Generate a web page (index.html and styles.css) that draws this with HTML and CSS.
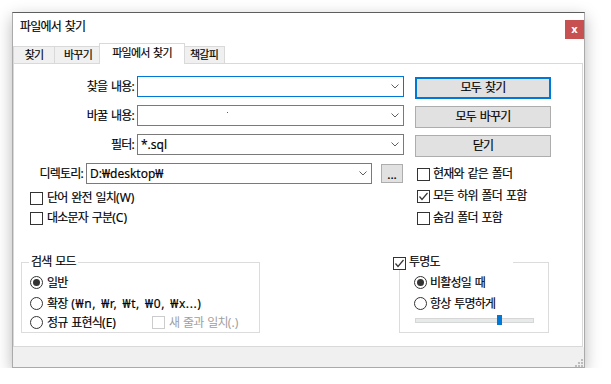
FILE: index.html
```html
<!DOCTYPE html>
<html lang="ko">
<head>
<meta charset="utf-8">
<title>파일에서 찾기</title>
<link rel="stylesheet" href="styles.css">
</head>
<body>
<div class="window">
  <div class="titlebar">
    <span class="title">파일에서 찾기</span>
    <span class="close">x</span>
  </div>
  <div class="tabs">
    <span class="tab t-find">찾기</span>
    <span class="tab t-replace">바꾸기</span>
    <span class="tab active">파일에서 찾기</span>
    <span class="tab t-mark">책갈피</span>
  </div>
  <div class="panel">
    <div class="top">
      <div class="left">
        <div class="row">
          <span class="lbl">찾을 내용:</span>
          <div class="combo focus"><span class="val"></span><svg class="chev" width="8" height="5" viewBox="0 0 8 5"><polyline points="0.5,0.5 4,4 7.5,0.5" fill="none" stroke="#606060" stroke-width="1"/></svg></div>
        </div>
        <div class="row">
          <span class="lbl">바꿀 내용:</span>
          <div class="combo"><span class="dot"></span><svg class="chev" width="8" height="5" viewBox="0 0 8 5"><polyline points="0.5,0.5 4,4 7.5,0.5" fill="none" stroke="#606060" stroke-width="1"/></svg></div>
        </div>
        <div class="row">
          <span class="lbl">필터:</span>
          <div class="combo"><span class="val lat">*.sql</span><svg class="chev" width="8" height="5" viewBox="0 0 8 5"><polyline points="0.5,0.5 4,4 7.5,0.5" fill="none" stroke="#606060" stroke-width="1"/></svg></div>
        </div>
        <div class="row dir">
          <span class="dirlbl">디렉토리:</span>
          <div class="combo wide"><span class="val lat">D:₩desktop₩</span><svg class="chev" width="8" height="5" viewBox="0 0 8 5"><polyline points="0.5,0.5 4,4 7.5,0.5" fill="none" stroke="#606060" stroke-width="1"/></svg></div>
          <span class="browse">...</span>
        </div>
        <div class="lchecks">
          <div class="ck"><span class="box"></span><span>단어 완전 일치<span class="lat">(W)</span></span></div>
          <div class="ck"><span class="box"></span><span>대소문자 구분<span class="lat">(C)</span></span></div>
        </div>
      </div>
      <div class="right">
        <div class="btn default">모두 찾기</div>
        <div class="btn">모두 바꾸기</div>
        <div class="btn last">닫기</div>
        <div class="rchecks">
          <div class="ck"><span class="box"></span><span>현재와 같은 폴더</span></div>
          <div class="ck"><span class="box"><svg width="11" height="11" viewBox="0 0 11 11"><polyline points="1.5,5.5 4,8.5 9.5,2" fill="none" stroke="#333" stroke-width="1.2"/></svg></span><span>모든 하위 폴더 포함</span></div>
          <div class="ck"><span class="box"></span><span>숨김 폴더 포함</span></div>
        </div>
      </div>
    </div>
    <div class="bottom">
      <fieldset class="group mode">
        <legend>검색 모드</legend>
        <div class="opts">
          <div class="opt"><span class="radio on"></span><span>일반</span></div>
          <div class="opt"><span class="radio"></span><span>확장 <span class="lat wide">(₩n, ₩r, ₩t, ₩0, ₩x...)</span></span></div>
          <div class="opt short"><span class="radio"></span><span class="rtext">정규 표현식<span class="lat">(E)</span></span><span class="box dis"></span><span class="distext">새 줄과 일치<span class="lat">(.)</span></span></div>
        </div>
      </fieldset>
      <fieldset class="group trans">
        <legend><span class="box"><svg width="11" height="11" viewBox="0 0 11 11"><polyline points="1.5,5.5 4,8.5 9.5,2" fill="none" stroke="#333" stroke-width="1.2"/></svg></span><span>투명도</span></legend>
        <div class="opts">
          <div class="opt"><span class="radio on"></span><span>비활성일 때</span></div>
          <div class="opt"><span class="radio"></span><span>항상 투명하게</span></div>
          <div class="slider"><div class="track"></div><div class="thumb" style="left:82px"></div></div>
        </div>
      </fieldset>
    </div>
  </div>
  <div class="status">
    <svg class="grip" width="8" height="8" viewBox="0 0 8 8" fill="#bcbcbc"><rect x="6" y="0" width="2" height="2"/><rect x="3" y="3" width="2" height="2"/><rect x="6" y="3" width="2" height="2"/><rect x="0" y="6" width="2" height="2"/><rect x="3" y="6" width="2" height="2"/><rect x="6" y="6" width="2" height="2"/></svg>
  </div>
</div>
</body>
</html>
```
FILE: styles.css
```css
html, body {
  margin: 0;
  background: #ffffff;
}
body {
  font-family: "Noto Sans", "Noto Sans CJK KR", sans-serif;
  font-size: 12px;
  line-height: 16px;
  letter-spacing: -0.8px;
  word-spacing: 1.5px;
  color: #000;
  -webkit-text-stroke: 0.15px #000;
}
.lat {
  letter-spacing: 0;
  word-spacing: 0;
}
.lat.wide {
  letter-spacing: 0.6px;
  word-spacing: 1.5px;
}
.window {
  margin: 12px 0 0 12px;
  width: 573px;
  height: 356px;
  box-sizing: border-box;
  border: 1px solid #aaaaaa;
  border-top-color: #5e5e5e;
  background: #fff;
  display: flex;
  flex-direction: column;
  box-shadow: 0 5px 15px rgba(0, 0, 0, 0.28);
}
.titlebar {
  height: 30px;
  display: flex;
  align-items: flex-start;
  flex: none;
}
.title {
  padding-left: 7px;
  margin-top: 6px;
}
.close {
  margin-left: auto;
  margin-top: 7px;
  width: 19px;
  height: 19px;
  background: #c75050;
  color: #fff;
  -webkit-text-stroke: 0;
  font-family: "DejaVu Sans", sans-serif;
  font-weight: bold;
  font-size: 10px;
  letter-spacing: 0;
  display: flex;
  align-items: center;
  justify-content: center;
}
.tabs {
  height: 20px;
  display: flex;
  align-items: flex-end;
  flex: none;
}
.tab {
  height: 17px;
  box-sizing: border-box;
  border: 1px solid #d9d9d9;
  border-bottom: none;
  background: #f0f0f0;
  padding: 0;
  text-align: center;
  font-size: 11px;
  line-height: 15px;
  margin-right: -1px;
  flex: none;
}
.t-find {
  width: 42px;
}
.t-replace {
  width: 48px;
}
.t-mark {
  width: 42px;
}
.tab.active {
  width: 86px;
  height: 21px;
  background: #fff;
  margin: 0 -2px -1px;
  line-height: 18px;
  position: relative;
  z-index: 2;
}
.panel {
  height: 284px;
  box-sizing: border-box;
  border: 1px solid #d9d9d9;
  margin-right: 1px;
  background: #fff;
  flex: none;
}
.status {
  flex: 1;
  background: #f0f0f0;
  display: flex;
  justify-content: flex-end;
  align-items: flex-end;
}
.grip {
  margin: 0 1px 0 0;
}
.top {
  display: flex;
  padding-top: 12px;
}
.left {
  width: 390px;
}
.row {
  display: flex;
  align-items: center;
  height: 21px;
  margin-bottom: 8px;
}
.row.dir {
  margin-bottom: 4px;
}
.lbl {
  width: 123px;
  box-sizing: border-box;
  padding-right: 3px;
  text-align: right;
}
.dirlbl {
  width: 72px;
  box-sizing: border-box;
  padding-right: 3px;
  text-align: right;
}
.combo {
  box-sizing: border-box;
  width: 267px;
  height: 21px;
  border: 1px solid #7a7a7a;
  display: flex;
  align-items: center;
  padding-left: 3px;
  background: #fff;
}
.combo.wide {
  width: 286px;
}
.combo.focus {
  border-color: #0078d7;
}
.chev {
  margin-left: auto;
  margin-right: 4px;
}
.dot {
  width: 1px;
  height: 1px;
  background: #0078d7;
  margin-left: 86px;
  align-self: flex-start;
  margin-top: 6px;
}
.browse {
  margin-left: 9px;
  width: 22px;
  height: 19px;
  box-sizing: border-box;
  border: 1px solid #adadad;
  background: #e1e1e1;
  display: flex;
  align-items: flex-end;
  justify-content: center;
  line-height: 14px;
  letter-spacing: 0;
}
.lchecks {
  margin-left: 16px;
}
.ck {
  display: flex;
  align-items: center;
  height: 20px;
}
.box {
  width: 13px;
  height: 13px;
  box-sizing: border-box;
  border: 1px solid #333;
  background: #fff;
  margin-right: 4px;
  flex: none;
  display: flex;
  align-items: center;
  justify-content: center;
}
.box.dis {
  border-color: #cccccc;
}
.right {
  margin-left: 11px;
  padding-top: 1px;
  width: 136px;
}
.btn {
  box-sizing: border-box;
  height: 22px;
  width: 136px;
  border: 1px solid #adadad;
  background: #e1e1e1;
  display: flex;
  align-items: center;
  justify-content: center;
  margin-bottom: 7px;
}
.btn.default {
  border: 2px solid #0078d7;
}
.btn.last {
  margin-bottom: 0;
}
.rchecks {
  margin-top: 6px;
  margin-left: 2px;
}
.rchecks .ck {
  height: 22px;
}
.rchecks .box {
  margin-right: 3px;
}
.bottom {
  display: flex;
  align-items: flex-start;
  margin-top: 25px;
}
.group {
  margin: 0;
  padding: 0;
  border: 1px solid #dcdcdc;
  min-width: 0;
  height: 79px;
  box-sizing: border-box;
}
.group legend {
  height: 16px;
  line-height: 16px;
}
.mode {
  margin-left: 7px;
  width: 239px;
}
.mode legend {
  margin-left: 7px;
  padding: 0 2px;
}
.trans {
  margin-left: 139px;
  width: 150px;
}
.trans legend {
  margin-left: -7px;
  width: 120px;
  padding: 0;
  display: flex;
  align-items: center;
  background: #fff;
}
.trans legend .box {
  margin-right: 3px;
  margin-top: 2px;
}
.opts {
  padding-top: 2px;
}
.mode .opts {
  padding-left: 8px;
}
.trans .opts {
  padding-left: 14px;
}
.opt {
  display: flex;
  align-items: center;
  height: 21px;
}
.opt.short {
  height: 17px;
}
.radio {
  width: 13px;
  height: 13px;
  box-sizing: border-box;
  border: 1px solid #333;
  border-radius: 50%;
  background: #fff;
  margin-right: 4px;
  flex: none;
  display: flex;
  align-items: center;
  justify-content: center;
}
.trans .radio {
  margin-right: 3px;
}
.radio.on::after {
  content: "";
  width: 7px;
  height: 7px;
  border-radius: 50%;
  background: #333;
}
.rtext {
  width: 105px;
  flex: none;
}
.distext {
  color: #a0a0a0;
  -webkit-text-stroke: 0;
}
.slider {
  position: relative;
  width: 119px;
  height: 10px;
  margin-left: 1px;
  margin-top: 1px;
}
.track {
  position: relative;
  top: 3px;
  height: 5px;
  box-sizing: border-box;
  border: 1px solid #d6d6d6;
  background: #e7eaea;
}
.thumb {
  position: absolute;
  top: 0;
  width: 5px;
  height: 10px;
  background: #0078d7;
}
```
